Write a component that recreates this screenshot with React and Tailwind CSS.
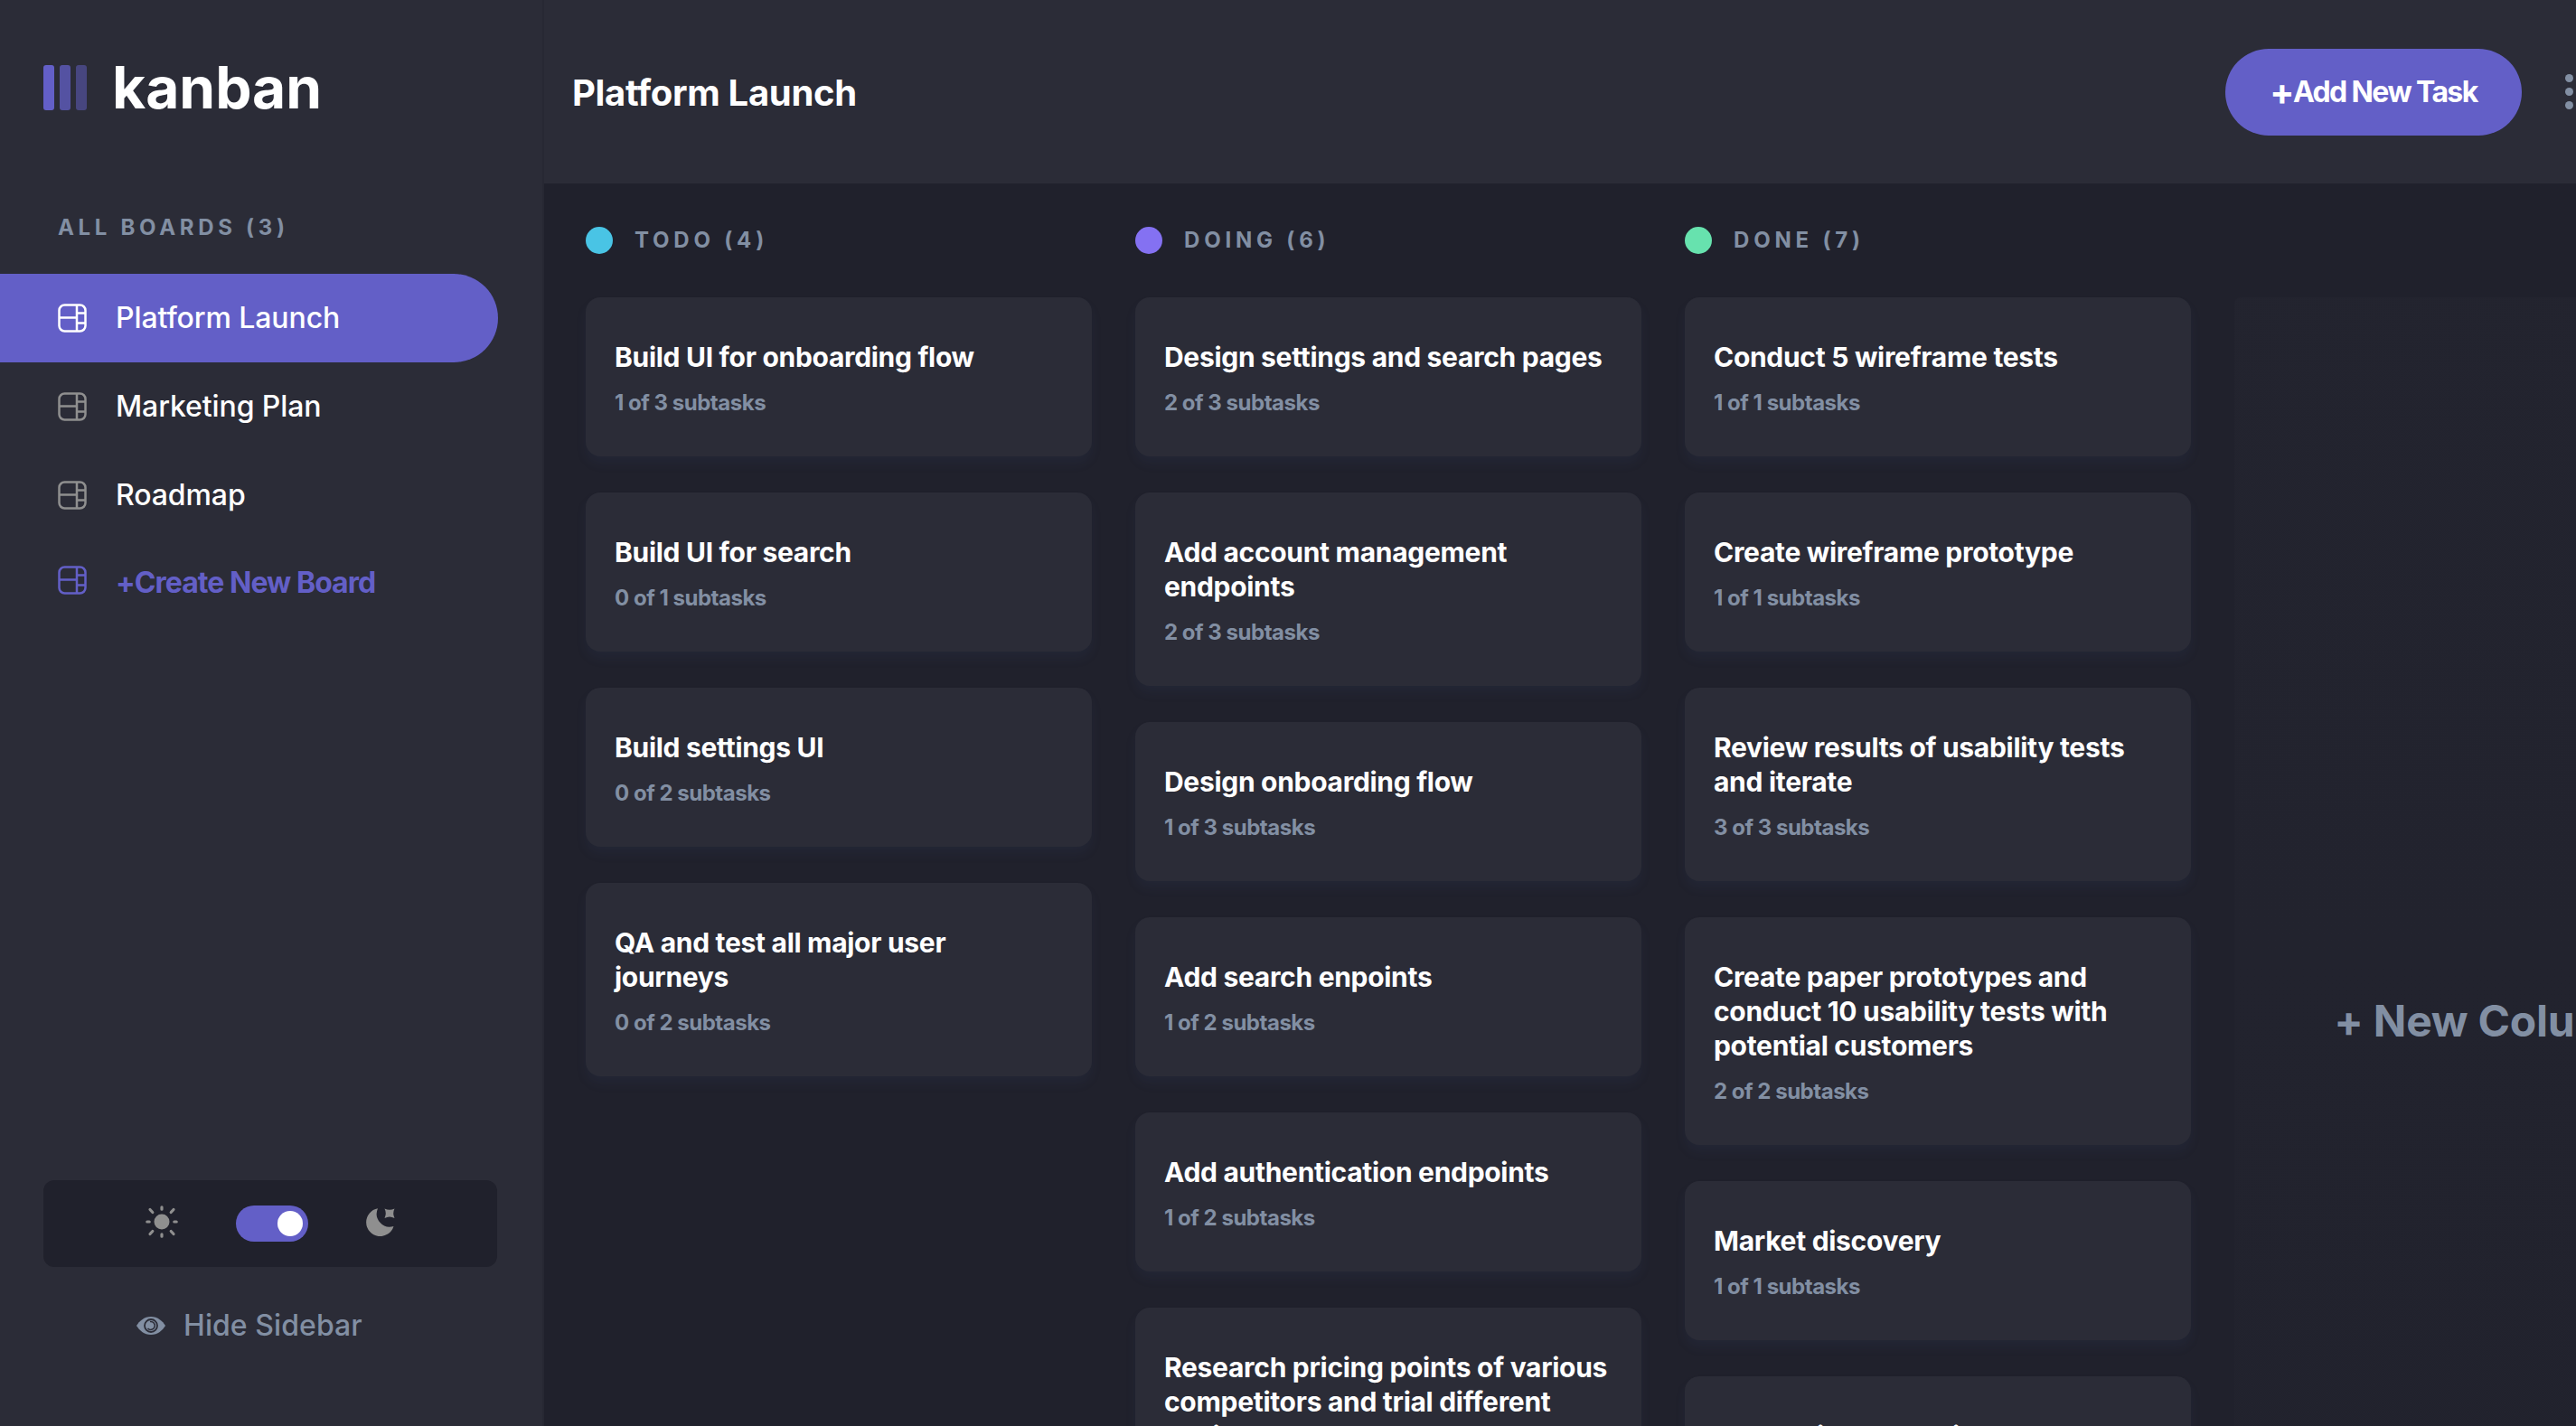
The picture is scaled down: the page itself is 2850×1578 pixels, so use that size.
const boards = ["Platform Launch", "Marketing Plan", "Roadmap"];

const columns = [
  {
    name: "TODO (4)",
    dot: "bg-[#49C4E5]",
    tasks: [
      ["Build UI for onboarding flow", "1 of 3 subtasks"],
      ["Build UI for search", "0 of 1 subtasks"],
      ["Build settings UI", "0 of 2 subtasks"],
      ["QA and test all major user journeys", "0 of 2 subtasks"],
    ],
  },
  {
    name: "DOING (6)",
    dot: "bg-[#8471F2]",
    tasks: [
      ["Design settings and search pages", "2 of 3 subtasks"],
      ["Add account management endpoints", "2 of 3 subtasks"],
      ["Design onboarding flow", "1 of 3 subtasks"],
      ["Add search enpoints", "1 of 2 subtasks"],
      ["Add authentication endpoints", "1 of 2 subtasks"],
      ["Research pricing points of various competitors and trial different business models", "1 of 3 subtasks"],
    ],
  },
  {
    name: "DONE (7)",
    dot: "bg-[#67E2AE]",
    tasks: [
      ["Conduct 5 wireframe tests", "1 of 1 subtasks"],
      ["Create wireframe prototype", "1 of 1 subtasks"],
      ["Review results of usability tests and iterate", "3 of 3 subtasks"],
      ["Create paper prototypes and conduct 10 usability tests with potential customers", "2 of 2 subtasks"],
      ["Market discovery", "1 of 1 subtasks"],
      ["Competitor analysis", "1 of 2 subtasks"],
    ],
  },
];

function BoardIcon({ className }) {
  return (
    <svg viewBox="0 0 32 32" fill="none" stroke="currentColor" strokeWidth="2.5" className={`w-8 h-8 shrink-0 ${className}`}>
      <rect x="1.5" y="1.5" width="29" height="29" rx="6" />
      <path d="M21 2v28M2 15.5h19M21 10.5h9M21 21.5h9" />
    </svg>
  );
}

function SunIcon() {
  return (
    <svg viewBox="0 0 36 36" fill="#8F8F8F" className="w-9 h-9 mb-1">
      <circle cx="18" cy="18" r="8.5" />
      <g stroke="#8F8F8F" strokeWidth="3.2" strokeLinecap="round">
        <path d="M18 1.800v2.400M18 31.800v2.400M1.800 18h2.400M31.800 18h2.400M5 4.500l2.800 3M28.200 28.500l2.800 3M5 31.500l2.800-3M28.200 7.500l2.800-3" />
      </g>
    </svg>
  );
}

function MoonIcon() {
  return (
    <svg viewBox="0 0 32 31" fill="#8F8F8F" className="w-8 h-[31px] mb-1">
      <path d="M13 .3A15.500 15.500 0 1 0 30.500 20 A14.500 14.500 0 0 1 13 .3Z" />
      <path d="M20.500 .5Q26 3 31.500 .5Q29 5.500 31.500 11Q26 8 20.500 11Q23 5.500 20.500 .5Z" />
    </svg>
  );
}

function EyeIcon() {
  return (
    <svg viewBox="0 0 32 20" className="w-8 h-5">
      <path d="M16 0C8.500 0 3 5 0 10c3 5 8.500 10 16 10s13-5 16-10C29 5 23.500 0 16 0Z" fill="#828FA3" />
      <circle cx="16" cy="10" r="7" fill="none" stroke="#2B2C37" strokeWidth="1.800" />
      <path d="M15 5.500a4.500 4.500 0 1 1-2.500 7.500" fill="none" stroke="#2B2C37" strokeWidth="1.500" />
    </svg>
  );
}

function Sidebar() {
  return (
    <aside className="w-[600px] shrink-0 h-full flex flex-col bg-[#2B2C37] pt-[72px]">
      <div className="flex items-center h-[50px] pl-12">
        <div className="flex gap-[6px]">
          <span className="w-3 h-[50px] rounded-[3px] bg-[#635FC7]" />
          <span className="w-3 h-[50px] rounded-[3px] bg-[#635FC7]/75" />
          <span className="w-3 h-[50px] rounded-[3px] bg-[#635FC7]/50" />
        </div>
        <span className="ml-[28px] text-[64px] leading-[50px] font-bold text-white">kanban</span>
      </div>

      <h2 className="mt-[115px] pl-16 text-[24px] leading-[30px] font-bold tracking-[0.195em] text-[#828FA3]">ALL BOARDS (3)</h2>

      <nav className="mt-[36px] flex flex-col w-[551px]">
        {boards.map((b, i) => (
          <a
            key={b}
            className={`flex items-center gap-8 h-[98px] pl-16 rounded-r-full text-[32px] font-medium text-white tracking-[-0.003em] ${i === 0 ? "bg-[#635FC7]" : ""}`}
          >
            <BoardIcon className={i === 0 ? "text-white" : "text-[#8F8F8F]"} />
            {b}
          </a>
        ))}
        <a className="flex items-center gap-8 h-[90px] pl-16 text-[32px] font-bold text-[#635FC7] tracking-[-0.03em]">
          <BoardIcon className="text-[#635FC7]" />
          <span className="mt-[5px]">+Create New Board</span>
        </a>
      </nav>

      <div className="mt-auto ml-12 w-[502px] h-[96px] rounded-xl bg-[#20212C] flex items-center justify-center">
        <SunIcon />
        <div className="mx-16 w-20 h-10 rounded-full bg-[#635FC7] flex items-center justify-end pr-[6px]">
          <span className="w-7 h-7 rounded-full bg-white" />
        </div>
        <MoonIcon />
      </div>

      <div className="mt-[45px] mb-[91px] h-10 pl-[151px] flex items-center gap-5 text-[32px] font-medium text-[#828FA3] tracking-[0.002em]">
        <EyeIcon />
        Hide Sidebar
      </div>
    </aside>
  );
}

function TaskCard({ title, sub }) {
  return (
    <div className="rounded-2xl bg-[#2B2C37] px-8 pt-[47px] pb-[44px] shadow-[0_8px_12px_rgba(54,78,126,0.1)]">
      <h3 className="text-[30px] leading-[38px] font-bold text-white tracking-[-0.01em]">{title}</h3>
      <p className="mt-[17px] text-[24px] leading-[30px] font-bold text-[#828FA3] tracking-[-0.02em]">{sub}</p>
    </div>
  );
}

function Column({ name, dot, tasks }) {
  return (
    <section className="w-[560px] shrink-0">
      <div className="flex items-center h-[30px] gap-6">
        <span className={`w-[30px] h-[30px] rounded-full ${dot}`} />
        <h2 className="text-[24px] leading-[30px] font-bold tracking-[0.2em] text-[#828FA3]">{name}</h2>
      </div>
      <div className="mt-12 flex flex-col gap-10">
        {tasks.map(([title, sub]) => (
          <TaskCard key={title} title={title} sub={sub} />
        ))}
      </div>
    </section>
  );
}

export default function App() {
  return (
    <div className="flex h-screen overflow-hidden bg-[#20212C] [font-family:Inter,sans-serif]">
      <Sidebar />
      <main className="flex-1 min-w-0 flex flex-col border-l-2 border-[#272833]">
        <header className="h-[203px] shrink-0 bg-[#2B2C37] flex items-center justify-between">
          <h1 className="pl-[31px] pt-[2px] text-[40px] font-bold text-white tracking-[-0.008em]">Platform Launch</h1>
          <div className="flex items-center gap-12 pr-[3px]">
            <button className="w-[328px] h-[96px] rounded-full bg-[#635FC7] flex items-center justify-center text-[32px] font-bold text-white tracking-[-0.05em]">
              <span className="text-[40px] leading-none">+</span>Add New Task
            </button>
            <div className="flex flex-col gap-[6px]">
              <span className="w-[9px] h-[9px] rounded-full bg-[#828FA3]" />
              <span className="w-[9px] h-[9px] rounded-full bg-[#828FA3]" />
              <span className="w-[9px] h-[9px] rounded-full bg-[#828FA3]" />
            </div>
          </div>
        </header>
        <div className="flex-1 min-h-0 overflow-hidden flex items-start gap-12 pl-[46px] pt-12">
          {columns.map((c) => (
            <Column key={c.name} {...c} />
          ))}
          <div className="w-[560px] h-[1602px] shrink-0 mt-[78px] rounded-lg bg-gradient-to-b from-[#2B2C37]/25 to-[#2B2C37]/10 flex items-center justify-center text-[48px] font-bold text-[#828FA3] tracking-[-0.005em]">
            + New Column
          </div>
        </div>
      </main>
    </div>
  );
}
